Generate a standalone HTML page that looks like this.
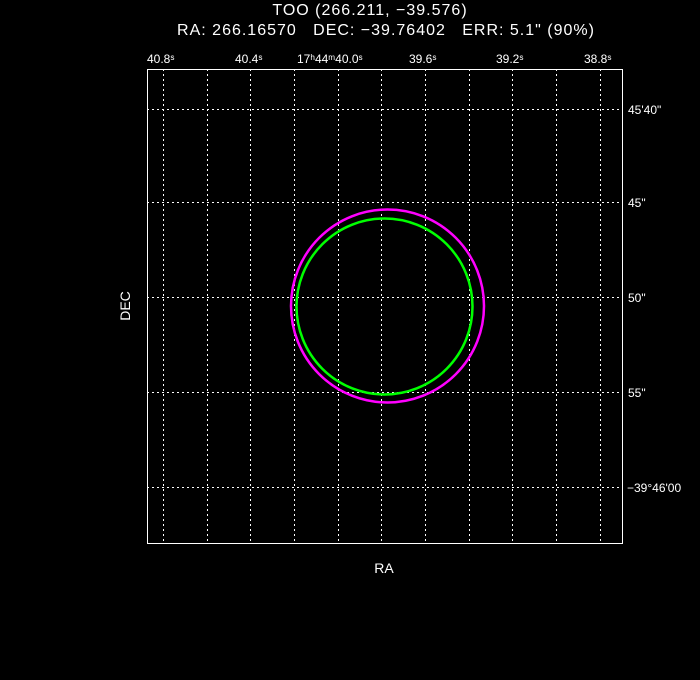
<!DOCTYPE html><html><head><style>body{margin:0;background:#000;width:700px;height:680px;overflow:hidden}text{white-space:pre}</style></head><body>
<svg width="700" height="680" xmlns="http://www.w3.org/2000/svg" style="display:block" xml:space="preserve">
<rect width="700" height="680" fill="#000"/>
<g font-family="Liberation Sans, sans-serif" fill="#fff">
<text x="370" y="15" font-size="16" text-anchor="middle" letter-spacing="1">TOO (266.211, −39.576)</text>
<text x="386" y="35" font-size="16" text-anchor="middle" letter-spacing="1">RA: 266.16570   DEC: −39.76402   ERR: 5.1" (90%)</text>
<g font-size="12">
<text x="147" y="63">40.8ˢ</text>
<text x="235" y="63">40.4ˢ</text>
<text x="297" y="63">17ʰ44ᵐ40.0ˢ</text>
<text x="409" y="63">39.6ˢ</text>
<text x="496" y="63">39.2ˢ</text>
<text x="584" y="63">38.8ˢ</text>
<text x="628" y="114">45'40"</text>
<text x="628" y="207">45"</text>
<text x="628" y="302">50"</text>
<text x="628" y="397">55"</text>
<text x="627" y="492">−39°46'00</text>
</g>
<text x="384" y="573" font-size="14" text-anchor="middle">RA</text>
<text x="130" y="306" font-size="14" text-anchor="middle" transform="rotate(-90 130 306)">DEC</text>
</g>
<g stroke="#fff" stroke-width="1" stroke-dasharray="2,3">
<path d="M163.5 69V543M207.5 69V543M250.5 69V543M294.5 69V543M338.5 69V543M381.5 69V543M425.5 69V543M469.5 69V543M512.5 69V543M556.5 69V543M600.5 69V543"/>
<path d="M147 109.5H622M147 202.5H622M147 297.5H622M147 392.5H622M147 487.5H622"/>
</g>
<rect x="147.5" y="69.5" width="475" height="474" fill="none" stroke="#fff"/>
<circle cx="387.5" cy="306" r="96.5" fill="none" stroke="#f0f" stroke-width="2.5"/>
<circle cx="384.5" cy="306.5" r="88" fill="none" stroke="#0f0" stroke-width="2.5"/>
</svg>
</body></html>
